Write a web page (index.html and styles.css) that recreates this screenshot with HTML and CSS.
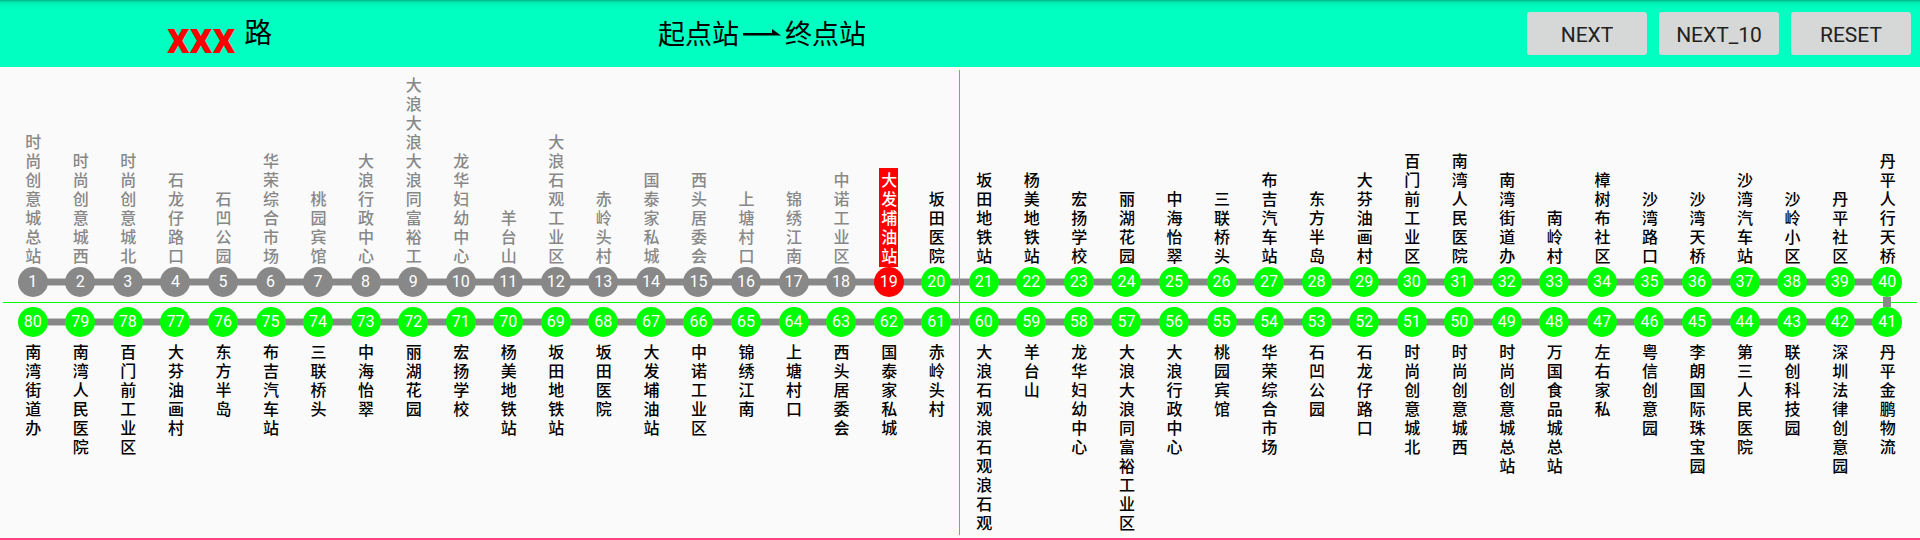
FILE: index.html
```html
<!DOCTYPE html>
<html lang="zh-CN">
<head>
<meta charset="utf-8">
<meta name="viewport" content="width=device-width, initial-scale=1">
<title>XXX 路</title>
<link rel="stylesheet" href="styles.css">
</head>
<body>
<header class="topbar">
  <h1 class="line-name"><span class="line-number">xxx</span><span class="line-suffix">路</span></h1>
  <p class="direction">
    <span>起点站</span>
    <svg class="direction-arrow" viewBox="0 0 38 12" width="38" height="12" aria-hidden="true"><path d="M0 4H29V0L38 6.500H0Z" fill="#000"/></svg>
    <span>终点站</span>
  </p>
  <div class="actions">
    <button class="action" type="button" id="next">NEXT</button>
    <button class="action" type="button" id="next10">NEXT_10</button>
    <button class="action" type="button" id="reset">RESET</button>
  </div>
</header>
<main class="board">
  <ol class="stops stops-out" id="out"></ol>
  <div class="divider"></div>
  <ol class="stops stops-back" id="back"></ol>
</main>
<script src="app.js"></script>
</body>
</html>
```

FILE: styles.css
```css
* {
  box-sizing: border-box;
}

body {
  margin: 0;
  min-height: 100vh;
  display: flex;
  flex-direction: column;
  background: #fafafa;
  border-bottom: 2px solid #ff4081;
  color: #000;
  font-family: Roboto, "Noto Sans CJK SC", sans-serif;
}

.topbar {
  display: grid;
  grid-template-columns: 1fr 1fr 1fr;
  align-items: center;
  height: 67px;
  padding: 0 9px 0 0;
  background: linear-gradient(#00b487, #00e8ae 2px, #00f8ba 5px, #00ffc0 10px);
}

.line-name {
  display: flex;
  justify-content: center;
  align-items: flex-start;
  gap: 9px;
  margin: 0;
  padding-right: 198px;
  font-weight: 400;
}

.line-number {
  padding-top: 11px;
  color: #f00;
  font-size: 45px;
  font-weight: 700;
  line-height: 48px;
}

.line-suffix {
  font-size: 28px;
  line-height: 62px;
}

.direction {
  display: flex;
  align-items: center;
  gap: 4px;
  margin: 0;
  padding: 2px 0 0 21px;
  font-size: 27px;
  line-height: 40px;
}

.actions {
  display: flex;
  justify-content: flex-end;
  gap: 12px;
}

.action {
  width: 120px;
  height: 43px;
  padding: 2px 0 0;
  border: 0;
  border-radius: 3px;
  background: #d6d7d7;
  color: #212121;
  font-family: Roboto, sans-serif;
  font-size: 21px;
}

.board {
  position: relative;
  flex: 1;
  padding: 3px 0;
}

.board::after {
  content: "";
  position: absolute;
  top: 3px;
  bottom: 3px;
  left: calc(50% - 1px);
  width: 1px;
  background: #0f0;
}

.stops {
  display: grid;
  grid-template-columns: repeat(40, 1fr);
  margin: 0;
  padding: 0 9px;
  list-style: none;
}

.stops-out {
  min-height: 227px;
}

.divider {
  height: 1px;
  margin: 5px 3px 4px;
  background: #0f0;
}

.stop {
  display: flex;
  flex-direction: column;
  align-items: center;
}

.stops-out .stop {
  justify-content: flex-end;
}

.stops-back .stop {
  flex-direction: column-reverse;
  justify-content: flex-end;
}

.stop-name {
  padding: 3px 1px 1px 2px;
  width: 19px;
  font-size: 16px;
  font-weight: 500;
  line-height: 19px;
  text-align: center;
  line-break: anywhere;
}

.stops-back .stop-name {
  padding-top: 6px;
}

.stop-node {
  position: relative;
  display: flex;
  justify-content: center;
  align-self: stretch;
}

.stop:not(:last-child) .stop-node::before {
  content: "";
  position: absolute;
  top: 11px;
  left: 50%;
  width: 100%;
  height: 8px;
  background: linear-gradient(#c4c4c4 1px, #888 1px, #888 7px, #c4c4c4 7px);
}

.stops-out .stop:last-child .stop-node::after {
  content: "";
  position: absolute;
  top: 100%;
  left: calc(50% - 4px);
  width: 8px;
  height: 10px;
  background: #888;
}

.stop-badge {
  position: relative;
  width: 30px;
  height: 30px;
  border-radius: 50%;
  background: #0f0;
  color: #fff;
  font-size: 16px;
  line-height: 30px;
  text-align: center;
}

.is-passed .stop-name {
  color: #888;
}

.is-passed .stop-badge {
  background: #888;
}

.is-current .stop-name {
  background: #f00;
  color: #fff;
}

.is-current .stop-badge {
  background: #f00;
}
```

FILE: app.js
```js
const START = 19;
const PER_ROW = 40;

const names = `
时尚创意城总站 时尚创意城西 时尚创意城北 石龙仔路口 石凹公园 华荣综合市场 桃园宾馆 大浪行政中心 大浪大浪大浪同富裕工 龙华妇幼中心
羊台山 大浪石观工业区 赤岭头村 国泰家私城 西头居委会 上塘村口 锦绣江南 中诺工业区 大发埔油站 坂田医院
坂田地铁站 杨美地铁站 宏扬学校 丽湖花园 中海怡翠 三联桥头 布吉汽车站 东方半岛 大芬油画村 百门前工业区
南湾人民医院 南湾街道办 南岭村 樟树布社区 沙湾路口 沙湾天桥 沙湾汽车站 沙岭小区 丹平社区 丹平人行天桥
丹平金鹏物流 深圳法律创意园 联创科技园 第三人民医院 李朗国际珠宝园 粤信创意园 左右家私 万国食品城总站 时尚创意城总站 时尚创意城西
时尚创意城北 石龙仔路口 石凹公园 华荣综合市场 桃园宾馆 大浪行政中心 大浪大浪同富裕工业区 龙华妇幼中心 羊台山 大浪石观浪石观浪石观
赤岭头村 国泰家私城 西头居委会 上塘村口 锦绣江南 中诺工业区 大发埔油站 坂田医院 坂田地铁站 杨美地铁站
宏扬学校 丽湖花园 中海怡翠 三联桥头 布吉汽车站 东方半岛 大芬油画村 百门前工业区 南湾人民医院 南湾街道办
`.trim().split(/\s+/);

let current = START;

function createStop(name, number) {
  const stop = document.createElement("li");
  const label = document.createElement("span");
  const node = document.createElement("span");
  const badge = document.createElement("span");
  stop.className = "stop";
  if (number < current) stop.classList.add("is-passed");
  if (number === current) stop.classList.add("is-current");
  label.className = "stop-name";
  label.textContent = name;
  node.className = "stop-node";
  badge.className = "stop-badge";
  badge.textContent = number;
  node.append(badge);
  stop.append(label, node);
  return stop;
}

function render() {
  const stops = names.map((name, i) => createStop(name, i + 1));
  document.getElementById("out").replaceChildren(...stops.slice(0, PER_ROW));
  document.getElementById("back").replaceChildren(...stops.slice(PER_ROW).reverse());
}

function goTo(number) {
  current = Math.min(number, names.length);
  render();
}

document.getElementById("next").addEventListener("click", () => goTo(current + 1));
document.getElementById("next10").addEventListener("click", () => goTo(current + 10));
document.getElementById("reset").addEventListener("click", () => goTo(1));

render();
```
